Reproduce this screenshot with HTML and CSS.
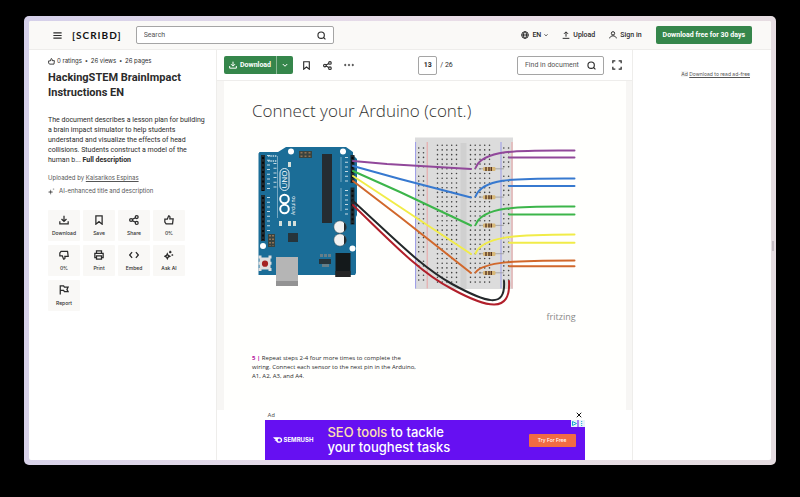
FILE: index.html
```html
<!DOCTYPE html>
<html lang="en">
<head>
<meta charset="utf-8">
<meta name="viewport" content="width=device-width, initial-scale=1">
<title>HackingSTEM BrainImpact Instructions EN</title>
<link rel="stylesheet" href="styles.css">
</head>
<body>
<svg class="defs" width="0" height="0" aria-hidden="true">
  <symbol id="i-download" viewBox="0 0 24 24"><path d="M12 2v13M6 9.500l6 6 6-6M2 15v6.500h20V15"/></symbol>
  <symbol id="i-upload" viewBox="0 0 24 24"><path d="M12 17V3M6 8.500l6-6 6 6M2 22h20"/></symbol>
  <symbol id="i-bookmark" viewBox="0 0 24 24"><path d="M4.500 2h15v20L12 16l-7.500 6z"/></symbol>
  <symbol id="i-share" viewBox="0 0 24 24"><circle cx="5" cy="12" r="3.500"/><circle cx="18.500" cy="5" r="3.500"/><circle cx="18.500" cy="19" r="3.500"/><path d="M8 10.500l7.500-4M8 13.500l7.500 4"/></symbol>
  <symbol id="i-thumb" viewBox="0 0 24 24"><path d="M2 10h6l3-8c3 0 4 2 3 7h8l-1.500 12H5L2 17z"/></symbol>
  <symbol id="i-search" viewBox="0 0 24 24"><circle cx="11" cy="11" r="8.500"/><path d="M17 17l5.500 5.500"/></symbol>
  <symbol id="i-chevron" viewBox="0 0 24 24"><path d="M3 8l9 9 9-9"/></symbol>
  <symbol id="i-sparkle" viewBox="0 0 24 24"><path d="M9 6c1 6 2 7 8 8-6 1-7 2-8 8-1-6-2-7-8-8 6-1 7-2 8-8zM19 1v6M16 4h6"/></symbol>
</svg>
<div class="frame">
<div class="window">
  <header class="topbar">
    <button class="plain" aria-label="Menu"><svg class="i9" viewBox="0 0 24 24"><path d="M1 5h22M1 12h22M1 19h22"/></svg></button>
    <a class="logo" href="#">[SCRIBD]</a>
    <form class="search">
      <input type="search" placeholder="Search" aria-label="Search">
      <button class="plain" type="button" aria-label="Submit search"><svg class="i9"><use href="#i-search"/></svg></button>
    </form>
    <nav class="links">
      <button class="plain lang"><svg class="i8" viewBox="0 0 24 24"><circle cx="12" cy="12" r="10"/><ellipse cx="12" cy="12" rx="4.500" ry="10"/><path d="M2 12h20"/></svg>EN<svg class="i4"><use href="#i-chevron"/></svg></button>
      <a href="#"><svg class="i8"><use href="#i-upload"/></svg>Upload</a>
      <a href="#"><svg class="i8" viewBox="0 0 24 24"><circle cx="12" cy="7" r="5"/><path d="M2 22c1-10 19-10 20 0"/></svg>Sign in</a>
    </nav>
    <button class="green trial">Download free for 30 days</button>
  </header>

  <div class="columns">
    <aside class="info">
      <p class="stats"><svg class="i7"><use href="#i-thumb"/></svg><span>0 ratings</span><b>•</b><span>26 views</span><b>•</b><span>26 pages</span></p>
      <h1>HackingSTEM BrainImpact Instructions EN</h1>
      <p class="summary">The document describes a lesson plan for building a brain impact simulator to help students understand and visualize the effects of head collisions. Students construct a model of the human b... <strong>Full description</strong></p>
      <p class="meta">Uploaded by <a href="#">Kaisarikos Espinas</a></p>
      <p class="meta ai"><svg class="i7 solid"><use href="#i-sparkle"/></svg>AI-enhanced title and description</p>
      <div class="actions">
        <button><svg class="i10"><use href="#i-download"/></svg>Download</button>
        <button><svg class="i10"><use href="#i-bookmark"/></svg>Save</button>
        <button><svg class="i10"><use href="#i-share"/></svg>Share</button>
        <button><svg class="i10"><use href="#i-thumb"/></svg>0%</button>
        <button><svg class="i10 flip"><use href="#i-thumb"/></svg>0%</button>
        <button><svg class="i10" viewBox="0 0 24 24"><path d="M6 8V2h12v6M6 18H2V8h20v10h-4M6 14h12v8H6z"/></svg>Print</button>
        <button><svg class="i10" viewBox="0 0 24 24"><path d="M7.500 5l-6 7 6 7M16.500 5l6 7-6 7"/></svg>Embed</button>
        <button><svg class="i10" viewBox="0 0 24 24"><path d="M8 9l2 4 4 2-4 2-2 4-2-4-4-2 4-2zM15 2v6M12 5h6M20 10v4M18 12h4"/></svg>Ask AI</button>
        <button><svg class="i10" viewBox="0 0 24 24"><path d="M3 23V2h8l2 3h9l-3 5.500 3 5.500h-9l-2-3H3"/></svg>Report</button>
      </div>
    </aside>

    <main class="viewer">
      <div class="toolbar">
        <div class="split green">
          <button><svg class="i8"><use href="#i-download"/></svg>Download</button>
          <button class="more" aria-label="More download options"><svg class="i6"><use href="#i-chevron"/></svg></button>
        </div>
        <button class="plain" aria-label="Save"><svg class="i9"><use href="#i-bookmark"/></svg></button>
        <button class="plain" aria-label="Share"><svg class="i9"><use href="#i-share"/></svg></button>
        <button class="plain" aria-label="More"><svg class="i10 dots" viewBox="0 0 24 24"><circle cx="3" cy="12" r="2"/><circle cx="12" cy="12" r="2"/><circle cx="21" cy="12" r="2"/></svg></button>
        <div class="pager"><input type="text" value="13" aria-label="Page number"><span>/ 26</span></div>
        <div class="find"><input type="text" placeholder="Find in document" aria-label="Find in document"><svg class="i9"><use href="#i-search"/></svg></div>
        <button class="plain" aria-label="Fullscreen"><svg class="i10" viewBox="0 0 24 24"><path d="M2 8V2h6M16 2h6v6M22 16v6h-6M8 22H2v-6"/></svg></button>
      </div>
      <article class="page">
        <h2>Connect your Arduino (cont.)</h2>
        <svg class="diagram" viewBox="252 133 336 192" role="img" aria-label="Arduino Uno wired to a breadboard">
          <g>
            <rect x="415" y="137.500" width="98" height="151.500" fill="#dcdcdc"/>
            <rect x="460.500" y="143" width="6" height="146" fill="#d0d0d0"/>
            <path d="M415.600 142v146.500M501 142v146.500" stroke="#9a9ae8" stroke-width="1"/>
            <path d="M427.200 142v146.500M512 142v146.500" stroke="#e9a3a3" stroke-width="1"/>
            <path d="M437.500 145.200v141M442.200 145.200v141M446.900 145.200v141M451.700 145.200v141M456.500 145.200v141M470.500 145.200v141M475.200 145.200v141M480 145.200v141M484.700 145.200v141M489.500 145.200v141" class="holes"/>
            <path d="M418.700 148v138M423.500 148v138M503.800 148v138M508.600 148v138" class="holes rail"/>
          </g>
          <g>
            <path d="M258.500 153.500l1-1.500h18.500l8-5h60l7 5v3l4 4v56l-1 2v56l-1 2h-96.500z" fill="#1b6d97"/>
            <path d="M261 155h4v36h-4zM261 195h4v46h-4zM350.500 155h4v28h-4zM350.500 187.500h4v37h-4z" fill="#202b30"/>
            <rect x="322" y="154" width="10" height="69" fill="#252c31"/>
            <g fill="#fff"><circle cx="291" cy="151.500" r="3"/><circle cx="343" cy="151.500" r="3"/><circle cx="263" cy="246" r="3"/><circle cx="352.500" cy="248.500" r="3"/></g>
            <path d="M299 151h13v7h-13zM268 234h7v13h-7z" fill="#39433f"/>
            <path d="M301.500 152v5M305.500 152v5M309.500 152v5M270 235v11M273 235v11" stroke="#8f7355" stroke-width="2" stroke-dasharray="1.500 2"/>
            <path d="M288 233h10v9h-10zM319 259h12v5h-12z" fill="#26343b"/>
            <path d="M320 254h3v3h-3zM324 254h3v3h-3zM328 254h3v3h-3zM322 264h7v3h-7z" fill="#657e89"/>
            <path d="M335.500 253h15v24h-15z" fill="#14191b"/><path d="M335.500 271h15v6h-15z" fill="#252525"/>
            <path d="M276 257h22v29h-22z" fill="#b5b5b5"/><path d="M276 281h22v5h-22z" fill="#939393"/>
            <path d="M260 255.500v16M270 255.500v16" stroke="#dedede" stroke-width="3" stroke-dasharray="3 3.300"/>
            <rect x="259.500" y="257.500" width="11" height="12" fill="#dedede"/><circle cx="265" cy="263.700" r="3.100" fill="#a42222"/>
            <g fill="#f2f2f2" stroke="#263c46" stroke-width=".5"><circle cx="340" cy="227" r="6.200"/><circle cx="340" cy="240" r="6.200"/></g>
            <path d="M344 222.500q4 4.500 0 9M344 235.500q4 4.500 0 9" fill="#20282c" stroke="#20282c" stroke-width="1"/>
            <g fill="none" stroke="#fff"><rect x="280" y="168.500" width="9" height="22" rx="4.500" stroke-width=".9"/><circle cx="284.500" cy="199" r="4.300" stroke-width="2"/><circle cx="284.500" cy="209" r="4.300" stroke-width="2"/></g>
            <g fill="#fff" class="silk">
              <text transform="translate(287.200 188.500) rotate(-90)" font-size="8">UNO</text>
              <text transform="translate(295 215) rotate(-90)" font-size="5">Arduino</text>
            </g>
            <path d="M277.500 156v62M341 157v25M341 188v23" stroke="#b5d0de" stroke-width=".6"/>
            <path d="M268.500 155v36M268.500 197v36M346.500 157v25M346.500 190v28M275 163v27" stroke="#c5dae4" stroke-width="3" stroke-dasharray="1 3.700"/>
            <path d="M268 156h9M268 161h9" stroke="#c5dae4" stroke-width="1.500" stroke-dasharray="1.500 .8"/>
            <path d="M288 162h3v5h-3zM279 221h3v5h-3zM288 221h3v5h-3zM293 221h3v5h-3z" fill="#d5dfda"/>
            <path d="M263 157v34M263 197v43M352.500 157v25M352.500 190v34" stroke="#06090a" stroke-width="2" stroke-dasharray="2 2.700"/>
          </g>
          <g>
            <g id="res"><path d="M479 168.800h25" stroke="#999" stroke-width=".8"/><rect x="483" y="167" width="12.500" height="4" rx="1.200" fill="#d8b878"/><path d="M486 167v4M489 167v4M491.300 167v4" stroke="#553322" stroke-width="1.400"/></g>
            <use href="#res" y="28.300"/><use href="#res" y="56.600"/><use href="#res" y="84.900"/><use href="#res" y="104"/>
          </g>
          <g class="wires">
            <path stroke="#91489a" d="M353 161l34 3 84 5M475.500 168c7-18 39-18 99-17.500M509 157.500h65.500"/>
            <path stroke="#3779cf" d="M353 166l47 13 71 18.500M475.500 196.500c7-19 39-18 99-18M509 186h65.500"/>
            <path stroke="#3cb54a" d="M353 171l47 21 71 33.500M475.500 225c7-18 39-19 99-18.500M509 214.500h65.500"/>
            <path stroke="#f1ec48" d="M353 176l47 31 71 47M475.500 253.500c7-17 39-19 99-19M509 242.800h65.500"/>
            <path stroke="#d1682c" d="M353 181l47 36 71 56M475.500 272.500c8-11 39-12 99-12M509 266.300h65.500"/>
            <path stroke="#24282a" d="M353 201c47 43 70 67 99 83 33 18 54 26 52-3"/>
            <path stroke="#b11f2a" d="M353 205c47 46 70 69 99 84 35 19 59 25 57-8"/>
          </g>
          <text class="brand" x="546.500" y="320" font-size="9">fritzing</text>
        </svg>
        <p class="step"><b>5 |</b> Repeat steps 2-4 four more times to complete the wiring. Connect each sensor to the next pin in the Arduino, A1, A2, A3, and A4.</p>
      </article>
      <section class="ad" aria-label="Advertisement">
        <div class="adhead"><span>Ad</span><button class="plain" aria-label="Close ad"><svg class="i6" viewBox="0 0 24 24"><path d="M3 3l18 18M21 3L3 21"/></svg></button></div>
        <div class="banner">
          <span class="semrush"><svg viewBox="0 0 32 24"><path d="M1 3h18a10 9 0 1 1-9 12l-6-3h5L1 5z" fill="#fff"/><circle cx="20" cy="12" r="5" fill="#6610f2"/></svg>SEMRUSH</span>
          <p><em>SEO tools</em> to tackle<br>your toughest tasks</p>
          <a class="cta" href="#">Try For Free</a>
          <span class="choices"><svg viewBox="0 0 14 7"><path d="M0 0h6.500v7H0zM7.500 0H14v7H7.500z" fill="#e9f2fb"/><path d="M1.500 1.500l4 2-4 2z" fill="none" stroke="#16a7cf"/><path d="M10.700 1v5" stroke="#16a7cf" stroke-dasharray="1 1"/></svg></span>
        </div>
      </section>
    </main>

    <aside class="side"><p><span>Ad</span> <a href="#">Download to read ad-free</a></p></aside>
  </div>
</div>
</div>
</body>
</html>
```

FILE: styles.css
```css
* { box-sizing: border-box; }
body {
  margin: 0;
  min-height: 100vh;
  padding: 16px 24px 32px;
  display: flex;
  background: #000;
  color: #2b2b2b;
  font: 7px/10px Roboto, "Liberation Sans", sans-serif;
}
h1, h2, p { margin: 0; }
a { color: inherit; text-decoration: none; }
button, input { font: inherit; color: inherit; margin: 0; }
button { border: 0; padding: 0; cursor: pointer; }
input { border: 0; padding: 0; background: none; outline: 0; min-width: 0; }
input::placeholder { color: #555; opacity: 1; }
svg { flex: none; display: block; }
.i4, .i6, .i7, .i8, .i9, .i10 { fill: none; stroke: currentColor; stroke-width: 3; }
.defs { position: absolute; }
.i4 { width: 4px; height: 4px; stroke-width: 5; }
.i6 { width: 6px; height: 6px; stroke-width: 4; }
.i7 { width: 7px; height: 7px; }
.i8 { width: 8px; height: 8px; }
.i9 { width: 9px; height: 9px; }
.i10 { width: 10px; height: 10px; }
.solid, .dots { fill: currentColor; stroke-width: 1; }
.flip { transform: scaleY(-1); }
.plain { background: none; display: flex; align-items: center; }
.green { background: #35864b; color: #fff; font-weight: 700; border-radius: 2px; }

.frame {
  position: relative;
  flex: 1;
  display: flex;
  padding: 5px;
  border-radius: 5px;
  background: linear-gradient(100deg, #d5d0ea, #e9dde8 50%, #e5dce0);
}
.frame::after {
  content: "";
  position: absolute;
  right: 2px;
  top: 50%;
  width: 2px;
  height: 10px;
  background: #c4bcc2;
}
.window {
  flex: 1;
  min-width: 0;
  display: flex;
  flex-direction: column;
  border-radius: 2px;
  background: #fff;
  overflow: hidden;
}
.topbar {
  display: flex;
  align-items: center;
  height: 29px;
  padding: 0 19px 0 24px;
  background: #faf9f7;
  border-bottom: 1px solid #eeedeb;
}
.logo { margin-left: 10px; font: 700 10px/14px Lato, sans-serif; letter-spacing: 1px; color: #111; }
.search {
  display: flex;
  align-items: center;
  width: 198px;
  height: 18px;
  margin-left: 14px;
  padding: 0 7px;
  border: 1px solid #a5a5a5;
  border-radius: 2px;
  background: #fff;
}
.search input { flex: 1; appearance: none; }
.links { display: flex; gap: 14px; margin: 0 14px 0 auto; }
.links > * { display: flex; align-items: center; gap: 3px; font-weight: 500; }
.trial { height: 18px; padding: 0 7px; }

.columns { flex: 1; display: grid; grid-template-columns: 188px 1fr 139px; }
.info { padding: 6px 10px 0 19px; border-right: 1px solid #eeedeb; }
.stats { display: flex; align-items: center; gap: 3px; font: 6px/10px Inter, sans-serif; }
.stats svg { margin-right: -1px; }
h1 { margin-top: 4px; font-size: 11px; line-height: 15px; font-weight: 700; }
.summary { margin-top: 15px; line-height: 10px; }
.meta { margin-top: 8px; font: 6px/10px Inter, sans-serif; color: #555; }
.meta a { text-decoration: underline; }
.ai { display: flex; align-items: center; gap: 4px; margin-top: 3px; }
.actions {
  display: grid;
  grid-template-columns: repeat(4, 32px);
  gap: 4px 3px;
  margin-top: 14px;
}
.actions button {
  display: flex;
  flex-direction: column;
  align-items: center;
  gap: 3px;
  height: 31px;
  padding-top: 5px;
  font: 500 5px/10px Inter, sans-serif;
  background: #f9f8f6;
  border-radius: 1px;
}

.viewer { display: flex; flex-direction: column; background: #fff; }
.toolbar {
  display: flex;
  align-items: center;
  gap: 12px;
  height: 31px;
  padding: 0 10px 0 7px;
  border-bottom: 1px solid #eeedeb;
}
.split { display: flex; height: 18px; margin-right: -3px; }
.split button { display: flex; align-items: center; gap: 3px; padding: 0 5px; background: none; }
.split .more { border-left: 1px solid #8ab996; }
.pager { display: flex; align-items: center; gap: 3px; margin: 0 auto; }
.pager input {
  width: 19px;
  height: 19px;
  text-align: center;
  font-weight: 700;
  border: 1px solid #a5a5a5;
  border-radius: 2px;
}
.find {
  display: flex;
  align-items: center;
  width: 87px;
  height: 19px;
  padding: 0 7px;
  margin-right: -4px;
  border: 1px solid #a5a5a5;
  border-radius: 2px;
}
.find input { flex: 1; }
.page {
  height: 329px;
  padding: 17px 38px 0 28px;
  background: #fffffd;
  border: solid #f7f6f4;
  border-width: 0 6px 0 7px;
}
h2 { font: 300 17px/26px "Open Sans", "Noto Sans", sans-serif; color: #333; }
.diagram { width: 100%; margin-top: 9px; fill: none; stroke: none; }
.holes { stroke: #444; stroke-width: 1.6; stroke-linecap: round; stroke-dasharray: 0 4.72; }
.rail { stroke-dasharray: 0 4.7 0 4.7 0 4.7 0 4.7 0 9.5; }
.wires { stroke-width: 2; stroke-linecap: round; }
.silk, .brand { font-family: "Open Sans", sans-serif; }
.brand { fill: #888; }
.step { max-width: 168px; margin-top: 29px; font: 6px/9px "Open Sans", "Noto Sans", sans-serif; }
.step b { color: #b5179e; }

.ad { width: 320px; margin: auto auto 0; }
.adhead { display: flex; justify-content: space-between; padding: 0 3px; font-size: 6px; color: #555; }
.adhead button { color: #111; }
.banner {
  position: relative;
  display: flex;
  align-items: center;
  height: 40px;
  padding: 0 9px 0 8px;
  background: #6610f2;
  color: #fff;
}
.semrush { display: flex; align-items: center; gap: 1px; font: 700 6px/10px Inter, sans-serif; }
.semrush svg { width: 10px; height: 8px; }
.banner p { margin-left: 14px; font: 500 13px/15px Inter, sans-serif; }
.banner em { color: #ffe1b0; font-style: normal; }
.cta { margin-left: auto; padding: 2px 9px; background: #f26b43; border-radius: 1px; font: 500 5px/9px Inter, sans-serif; }
.choices { position: absolute; top: 0; right: 0; }
.choices svg { width: 14px; height: 7px; stroke-width: 1; }

.side { padding: 19px 21px 0; border-left: 1px solid #eeedeb; font: 5px/10px Inter, sans-serif; text-align: right; color: #555; }
.side a { text-decoration: underline; }
.side span { background: #f3f3f3; }
```
